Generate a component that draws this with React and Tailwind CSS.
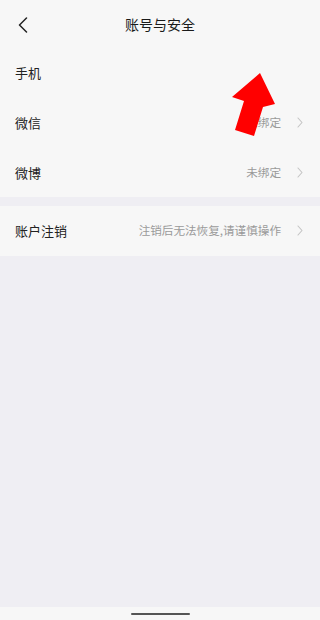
import React from "react";

const font = { fontFamily: '"Noto Sans CJK SC", "Noto Sans", sans-serif' };

function Chevron() {
  return (
    <svg width="6" height="11" viewBox="0 0 6 11" fill="none" className="shrink-0">
      <path d="M1 1l4 4.5-4 4.5" stroke="#c4c4c4" strokeWidth="1.1" strokeLinecap="round" strokeLinejoin="round" />
    </svg>
  );
}

function Row({ label, value }) {
  return (
    <div className="flex h-[49.5px] items-center justify-between pl-[15px] pr-[17px]">
      <span className="text-[13px] text-[#222]">{label}</span>
      <div className="flex items-center gap-[16px]">
        {value && <span className="text-[11.6px] text-[#9a9a9a]">{value}</span>}
        <Chevron />
      </div>
    </div>
  );
}

export default function App() {
  return (
    <div className="relative flex h-[620px] w-[320px] flex-col overflow-hidden bg-[#efeef3]" style={font}>
      <div className="bg-[#f7f7f7]">
        <div className="relative flex h-[48px] items-center justify-center">
          <svg className="absolute left-[18px] top-[17px]" width="10" height="16" viewBox="0 0 10 16" fill="none">
            <path d="M8.5 1L1.5 8l7 7" stroke="#222" strokeWidth="1.5" strokeLinecap="round" strokeLinejoin="round" />
          </svg>
          <span className="text-[14px] text-[#1a1a1a]">账号与安全</span>
        </div>
        <div className="flex h-[50px] items-center pl-[15px]">
          <span className="text-[13px] text-[#222]">手机</span>
        </div>
        <Row label="微信" value="未绑定" />
        <Row label="微博" value="未绑定" />
      </div>
      <div className="mt-[9px] bg-[#f7f7f7]">
        <Row label="账户注销" value="注销后无法恢复,请谨慎操作" />
      </div>
      <div className="flex-1" />
      <div className="flex h-[13px] items-center justify-center bg-[#f7f7f7]">
        <div className="h-[2px] w-[59px] rounded-full bg-[#555]" />
      </div>
      <svg className="absolute left-0 top-0" width="320" height="620" viewBox="0 0 320 620">
        <polygon points="260,73 275,104 263,107 254,136 235,130 244,101 232,97" fill="#ff0000" />
      </svg>
    </div>
  );
}
